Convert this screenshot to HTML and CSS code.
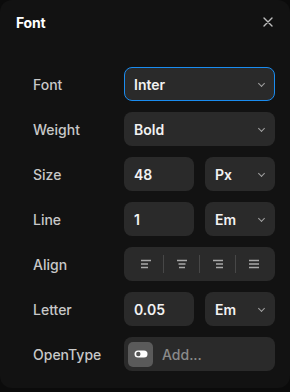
FILE: index.html
```html
<!DOCTYPE html>
<html lang="en">
<head>
  <meta charset="UTF-8">
  <title>Font</title>
  <link rel="stylesheet" href="styles.css">
</head>
<body>
  <div class="panel">
    <header class="panel-head">
      <h1>Font</h1>
      <button class="close" aria-label="Close">
        <svg width="10" height="10" viewBox="0 0 10 10"><path d="M1 1L9 9M9 1L1 9" stroke="currentColor" stroke-width="1.4" stroke-linecap="round"/></svg>
      </button>
    </header>

    <div class="rows">
      <label class="lbl">Font</label>
      <div class="field select focus"><span>Inter</span><i class="chev"></i></div>

      <label class="lbl">Weight</label>
      <div class="field select"><span>Bold</span><i class="chev"></i></div>

      <label class="lbl">Size</label>
      <div class="pair">
        <div class="field"><span>48</span></div>
        <div class="field select"><span>Px</span><i class="chev"></i></div>
      </div>

      <label class="lbl">Line</label>
      <div class="pair">
        <div class="field"><span>1</span></div>
        <div class="field select"><span>Em</span><i class="chev"></i></div>
      </div>

      <label class="lbl">Align</label>
      <div class="field align">
        <button class="seg">
          <svg width="12" height="10" viewBox="0 0 12 10"><path d="M1 1.5H11M1 5H8M1 8.5H8" /></svg>
        </button>
        <button class="seg">
          <svg width="12" height="10" viewBox="0 0 12 10"><path d="M1 1.5H11M2.5 5H9.5M3 8.5H9" /></svg>
        </button>
        <button class="seg">
          <svg width="12" height="10" viewBox="0 0 12 10"><path d="M1 1.5H11M4 5H11M4 8.5H11" /></svg>
        </button>
        <button class="seg">
          <svg width="12" height="10" viewBox="0 0 12 10"><path d="M1 1.5H11M1 5H11M1 8.5H11" /></svg>
        </button>
      </div>

      <label class="lbl">Letter</label>
      <div class="pair">
        <div class="field"><span>0.05</span></div>
        <div class="field select"><span>Em</span><i class="chev"></i></div>
      </div>

      <label class="lbl">OpenType</label>
      <div class="field opentype">
        <span class="toggle-box">
          <svg width="14" height="8" viewBox="0 0 14 8"><rect x="0.5" y="0.5" width="13" height="7" rx="3.5" fill="#fff"/><circle cx="4.3" cy="4" r="2.2" fill="#555"/></svg>
        </span>
        <span class="placeholder">Add...</span>
      </div>
    </div>
  </div>
</body>
</html>
```

FILE: styles.css
```css
* {
  box-sizing: border-box;
  margin: 0;
  padding: 0;
}
body {
  background: #0b0b0b;
  font-family: Inter, "Noto Sans", sans-serif;
  color: #fff;
}
.panel {
  width: 290px;
  height: 388px;
  background: #121212;
  border-radius: 12px;
}
.panel-head {
  height: 44px;
  display: flex;
  align-items: center;
  justify-content: space-between;
  padding: 0 17px 0 16px;
}
.panel-head h1 {
  font-size: 14px;
  font-weight: 700;
  letter-spacing: -0.2px;
}
.close {
  background: none;
  border: none;
  color: #bdbdbd;
  display: flex;
}

/* 行レイアウト */
.rows {
  display: grid;
  grid-template-columns: 91px 151px;
  grid-auto-rows: 34px;
  row-gap: 11px;
  padding: 23px 0 0 33px;
  align-items: center;
}
.lbl {
  font-size: 14px;
  font-weight: 500;
  color: #c8c8c8;
}
.pair {
  display: grid;
  grid-template-columns: 70px 70px;
  column-gap: 11px;
  height: 34px;
}
.field {
  height: 34px;
  background: #2a2a2a;
  border-radius: 8px;
  display: flex;
  align-items: center;
  padding: 0 10px;
  font-size: 14px;
  font-weight: 600;
  color: #f2f2f2;
}
.field.select {
  justify-content: space-between;
  padding-right: 11px;
}
.field.focus {
  border: 1px solid #1a8cf0;
  padding-left: 9px;
  padding-right: 10px;
}
.chev {
  width: 5px;
  height: 5px;
  border-right: 1.3px solid #a0a0a0;
  border-bottom: 1.3px solid #a0a0a0;
  transform: translateY(-1px) rotate(45deg);
}

/* 揃えボタン */
.field.align {
  padding: 0 4px;
}
.seg {
  flex: 1;
  height: 18px;
  background: none;
  border: none;
  border-left: 1px solid #474747;
  display: flex;
  align-items: center;
  justify-content: center;
}
.seg:first-child {
  border-left: none;
}
.seg svg path {
  stroke: #a9a9a9;
  stroke-width: 1.6;
  fill: none;
}

/* OpenType */
.field.opentype {
  padding: 0 4px;
  gap: 9px;
}
.toggle-box {
  width: 25px;
  height: 25px;
  background: #5a5a5a;
  border-radius: 5px;
  display: flex;
  align-items: center;
  justify-content: center;
}
.placeholder {
  color: #8a8a8a;
  font-weight: 500;
}
```
